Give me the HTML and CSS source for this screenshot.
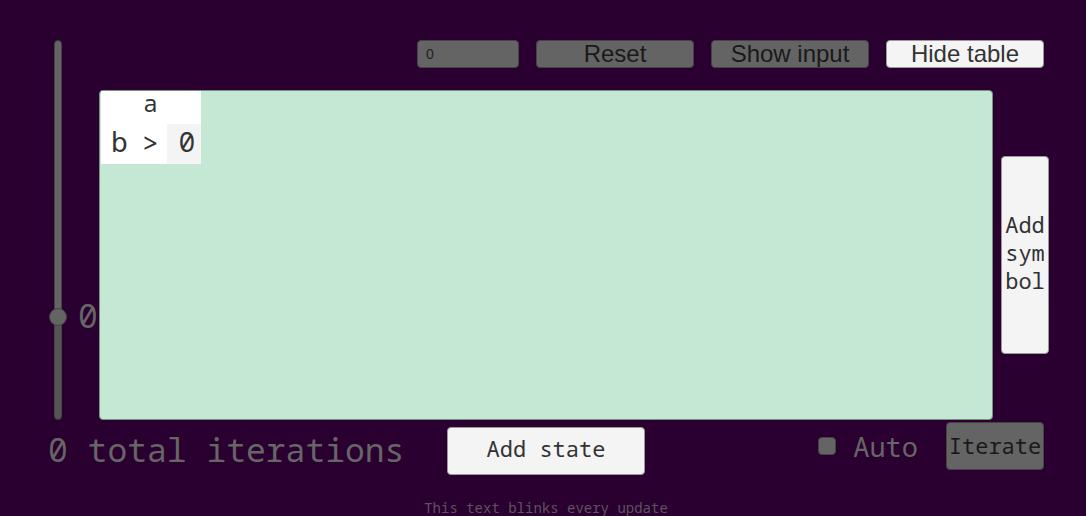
FILE: index.html
```
<!DOCTYPE html>
<html lang="en">
<head>
<meta charset="utf-8">
<meta name="viewport" content="width=device-width, initial-scale=1">
<title>Turing machine</title>
<link rel="stylesheet" href="styles.css">
</head>
<body>
<main class="page">
  <div class="speed">
    <input class="slider" type="range" min="-26" max="75" value="0" aria-label="Speed">
    <output class="speed-value">0</output>
  </div>
  <div class="toolbar">
    <input class="field" type="text" value="0" aria-label="Input">
    <button class="tool dim" type="button">Reset</button>
    <button class="tool dim" type="button">Show input</button>
    <button class="tool" type="button">Hide table</button>
  </div>
  <section class="panel">
    <table class="states">
      <tr class="symbols"><td></td><th scope="col">a</th><td></td></tr>
      <tr class="state"><th scope="row">b</th><td class="move">&gt;</td><td class="next">0</td></tr>
    </table>
  </section>
  <button class="add-symbol" type="button">Add symbol</button>
  <div class="controls">
    <p class="total">0 total iterations</p>
    <button class="add-state" type="button">Add state</button>
    <div class="run">
      <label class="auto"><input class="check" type="checkbox">Auto</label>
      <button class="iterate dim" type="button">Iterate</button>
    </div>
  </div>
  <p class="blink">This text blinks every update</p>
</main>
</body>
</html>
```
FILE: styles.css
```
* { box-sizing: border-box; }
body {
  margin: 0;
  background: #2a0030;
  color: #666;
  font-family: "Noto Sans Mono", "DejaVu Sans Mono", monospace;
}
p { margin: 0; }
button, input { margin: 0; font-family: inherit; }
button {
  padding: 0;
  border: 1px solid #999;
  border-radius: 4px;
  background: #f4f4f4;
  color: #333;
  font-size: 22px;
  line-height: 28px;
}
.dim { background: #646464; border-color: #444; color: #1a1a1a; }

.page {
  display: grid;
  grid-template-columns: 43px minmax(0, 1fr) 48px;
  grid-template-rows: 28px minmax(0, 1fr) 80px 16px;
  column-gap: 8px;
  min-height: 100vh;
  padding: 40px 37px 0 48px;
}
.speed {
  grid-row: 1 / 3;
  grid-column: 1;
  display: flex;
  align-items: stretch;
  gap: 11px;
}
.slider {
  flex: none;
  width: 19px;
  appearance: none;
  background: none;
  writing-mode: vertical-lr;
  direction: rtl;
}
.slider::-webkit-slider-runnable-track {
  width: 8px;
  border: 1px solid #444;
  border-radius: 4px;
  background: linear-gradient(#646464 73%, #555 73%);
}
.slider::-webkit-slider-thumb {
  appearance: none;
  width: 18px;
  height: 18px;
  margin-left: -6px;
  border: 1px solid #444;
  border-radius: 50%;
  background: #646464;
}
.speed-value {
  align-self: flex-end;
  padding-bottom: 84px;
  font-size: 33px;
  line-height: 40px;
}

.toolbar {
  grid-column: 2 / 4;
  display: flex;
  justify-content: flex-end;
  gap: 17px;
  padding-right: 5px;
}
.field {
  width: 102px;
  padding: 0 8px;
  border: 1px solid #444;
  border-radius: 4px;
  background: #646464;
  color: #222;
  font-family: "Liberation Sans", Arial, sans-serif;
  font-size: 14px;
}
.tool {
  width: 158px;
  font-family: "Liberation Sans", Arial, sans-serif;
  font-size: 24px;
  line-height: 26px;
}

.panel {
  grid-column: 2;
  min-height: 200px;
  margin-top: 22px;
  padding-left: 1px;
  border: 1px solid #78907f;
  border-radius: 4px;
  background: #c4e8d3;
}
.states {
  border-collapse: collapse;
  background: #fff;
  color: #333;
  font-size: 24px;
}
.states th, .states td {
  width: 33px;
  padding: 0;
  font-weight: normal;
  text-align: center;
}
.symbols th, .symbols td { height: 33px; padding-bottom: 9px; line-height: 24px; }
.state th, .state td { height: 40px; padding-bottom: 6px; line-height: 34px; }
.state th, .state td { font-size: 28px; }
.state th { padding-left: 4px; }
.state .move { padding-bottom: 4px; }
.states td:last-child { width: 34px; }
.state .next { padding-left: 6px; background: #f4f4f4; }

.add-symbol {
  align-self: center;
  height: 56%;
  margin-top: 22px;
  padding-bottom: 6px;
  word-break: break-all;
}
.controls {
  grid-column: 1 / 4;
  display: grid;
  grid-template-columns: minmax(0, 1fr) 198px minmax(0, 1fr);
  padding: 2px 5px 0 0;
}
.total { font-size: 33px; line-height: 56px; white-space: nowrap; }
.add-state { height: 48px; margin-top: 5px; padding-bottom: 6px; }
.run {
  display: flex;
  justify-content: flex-end;
  gap: 28px;
}
.auto {
  display: flex;
  align-items: center;
  gap: 17px;
  height: 48px;
  font-size: 27px;
}
.check {
  appearance: none;
  width: 18px;
  height: 18px;
  border: 1px solid #444;
  border-radius: 4px;
  background: #646464;
}
.iterate { width: 98px; height: 48px; padding-bottom: 2px; }
.blink {
  grid-column: 1 / 4;
  padding-right: 5px;
  color: #5c545e;
  font-size: 14px;
  line-height: 16px;
  text-align: center;
}
```
